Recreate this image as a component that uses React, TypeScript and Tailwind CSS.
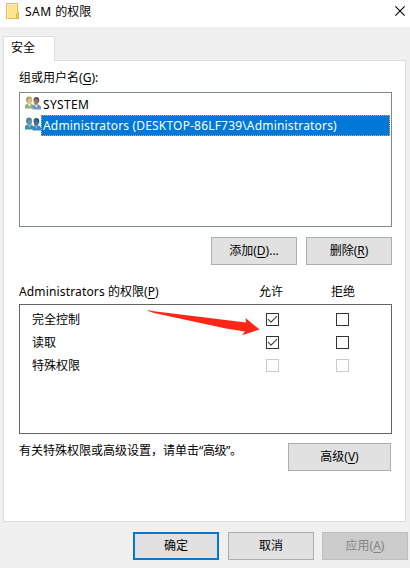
import type { ReactNode } from "react";

function FolderIcon() {
  return (
    <svg width="14" height="17" viewBox="0 0 14 17" className="block shrink-0">
      <path d="M.5.5H11.5V9.5H12.5V15.5H.5Z" fill="#ffe490" stroke="#e5bd4b" />
      <path d="M1.5 15V1.5H11" fill="none" stroke="#fff0b5" />
      <path d="M10.5 15.5V11L12.5 9.5V15.5Z" fill="#f5d56c" stroke="#dfb441" />
    </svg>
  );
}

function UsersIcon({ selected = false }: { selected?: boolean }) {
  const c = selected
    ? { hairL: "#4f8391", faceL: "#5d97b4", bodyL: "#3d8fa3", hairR: "#33536f", faceR: "#41719b", bodyR: "#3a83c4", shirt: "#79b5df" }
    : { hairL: "#b5a060", faceL: "#e0bf94", bodyL: "#94b070", hairR: "#5a5250", faceR: "#a9795e", bodyR: "#7394c0", shirt: "#e5e9ef" };
  return (
    <svg width="16" height="16" viewBox="0 0 16 16" className="block shrink-0">
      <path d="M0 12.5V10Q0 8 2.5 7.5H6Q8.5 8 8.5 11V12.5Z" fill={c.bodyL} />
      <path d="M2.5 7.5L4.5 11L6.5 7.5Z" fill={c.shirt} />
      <ellipse cx="4" cy="3.8" rx="3" ry="3.4" fill={c.hairL} />
      <ellipse cx="4.7" cy="5.2" rx="2" ry="2.8" fill={c.faceL} />
      <path d="M7.5 13.5V11Q7.5 9 10 8.5H13.2Q16 9 16 12V13.5Z" fill={c.bodyR} />
      <path d="M9.7 8.5L11.2 12L12.8 8.5Z" fill={c.shirt} />
      <ellipse cx="11.4" cy="4.3" rx="2.8" ry="3.2" fill={c.hairR} />
      <ellipse cx="11.1" cy="6" rx="2.1" ry="2.9" fill={c.faceR} />
    </svg>
  );
}

function Key({ children }: { children: string }) {
  return (
    <>
      (<span className="underline decoration-1 underline-offset-2">{children}</span>)
    </>
  );
}

function Button({ children, className }: { children: ReactNode; className: string }) {
  return (
    <button className={`flex h-7 shrink-0 items-center justify-center whitespace-nowrap ${className}`}>
      {children}
    </button>
  );
}

function Check({ checked = false, disabled = false }: { checked?: boolean; disabled?: boolean }) {
  return (
    <span className={`block size-[13px] border ${disabled ? "border-[#cccccc]" : "border-[#333333]"}`}>
      {checked && (
        <svg width="11" height="11" viewBox="0 0 11 11" className="block">
          <path d="M1 5.2L4 8.2L10 2.2" fill="none" stroke="#444" strokeWidth="1.2" />
        </svg>
      )}
    </span>
  );
}

const permissions = [
  { name: "完全控制", allow: true, disabled: false },
  { name: "读取", allow: true, disabled: false },
  { name: "特殊权限", allow: false, disabled: true },
];

const plain = "border border-[#adadad] bg-[#e1e1e1]";

export default function App() {
  return (
    <div className="flex h-[568px] w-[410px] flex-col overflow-hidden bg-[#f0f0f0] font-['Noto_Sans','Noto_Sans_CJK_SC',sans-serif] text-[12px] leading-4 text-black">
      <header className="flex h-[27px] shrink-0 items-start bg-white pl-[6px] pr-[5px] pt-[3px]">
        <FolderIcon />
        <span className="ml-[5px] mt-px whitespace-nowrap"><span className="tracking-[0.5px]">SAM </span>的权限</span>
        <svg width="10" height="10" viewBox="0 0 10 10" className="ml-auto mt-[3px] block">
          <path d="M.4.4L9.6 9.6M9.6.4L.4 9.6" stroke="#000" strokeWidth="1.1" />
        </svg>
      </header>

      <div className="z-10 ml-[3px] mt-[9px] flex h-[25px] w-[52px] shrink-0 justify-start border border-b-0 border-[#dcdcdc] bg-white pl-[7px] pt-[3px]">
        安全
      </div>
      <main className="-mt-px ml-[3px] flex h-[462px] w-[403px] shrink-0 flex-col border border-[#dcdcdc] bg-white pl-[15px] pr-[13px] pt-[9px]">
        <div className="h-[22px]">组或用户名<Key>G</Key>:</div>

        <div className="flex h-[135px] w-[373px] shrink-0 flex-col border border-[#828790] pl-[5px] pr-px pt-[2px]">
          <div className="flex h-5 items-start">
            <div className="pt-px"><UsersIcon /></div>
            <span className="pl-[2px] pt-[2px] tracking-[0.35px]">SYSTEM</span>
          </div>
          <div className="flex h-[21px] items-start">
            <div className="pt-[2px]"><UsersIcon selected /></div>
            <span className="flex h-[21px] flex-1 items-center whitespace-nowrap border border-dotted border-[#ff9c4a] bg-[#0078d7] pl-px tracking-[0.18px] text-white">
              Administrators (DESKTOP-86LF739\Administrators)
            </span>
          </div>
        </div>

        <div className="mt-[10px] flex shrink-0 gap-[9px] pl-[192px]">
          <Button className={`w-[86px] ${plain}`}>添加<Key>D</Key>...</Button>
          <Button className={`w-[86px] ${plain}`}>删除<Key>R</Key></Button>
        </div>

        <div className="mt-[19px] flex h-5 shrink-0 whitespace-nowrap">
          <span className="w-[240px]"><span className="tracking-[0.15px]">Administrators </span>的权限<Key>P</Key></span>
          <span className="w-[72px]">允许</span>
          <span>拒绝</span>
        </div>

        <div className="relative h-[130px] w-[373px] shrink-0 border border-[#646464] pl-3 pt-[3px]">
          {permissions.map((p) => (
            <div key={p.name} className="flex h-[23px] items-center">
              <span className="w-[234px]">{p.name}</span>
              <span className="w-[70px]"><Check checked={p.allow} disabled={p.disabled} /></span>
              <Check disabled={p.disabled} />
            </div>
          ))}
          <svg width="114" height="28" viewBox="146 309 114 28" className="absolute left-[126px] top-[4px]">
            <path d="M147 310.5Q147.5 310 154 311.2L246 322.5L245.5 318L259.5 329.5L242 335.3L245 331.5L226 328.5L154 313Z" fill="#ff2517" />
          </svg>
        </div>

        <div className="flex shrink-0 items-start pt-[9px]">
          <span className="w-[269px] whitespace-nowrap">有关特殊权限或高级设置，请单击<span className="tracking-[-0.4px]">“高级”</span>。</span>
          <Button className={`w-[103px] ${plain}`}>高级<Key>V</Key></Button>
        </div>
      </main>

      <footer className="mt-[10px] flex shrink-0 pl-[133px]">
        <Button className="w-[86px] border-2 border-[#0078d7] bg-[#e1e1e1]">确定</Button>
        <Button className={`ml-[9px] w-[86px] ${plain}`}>取消</Button>
        <Button className="ml-2 w-[86px] border border-[#bfbfbf] bg-[#cccccc] text-[#838383]">应用<Key>A</Key></Button>
      </footer>
    </div>
  );
}
